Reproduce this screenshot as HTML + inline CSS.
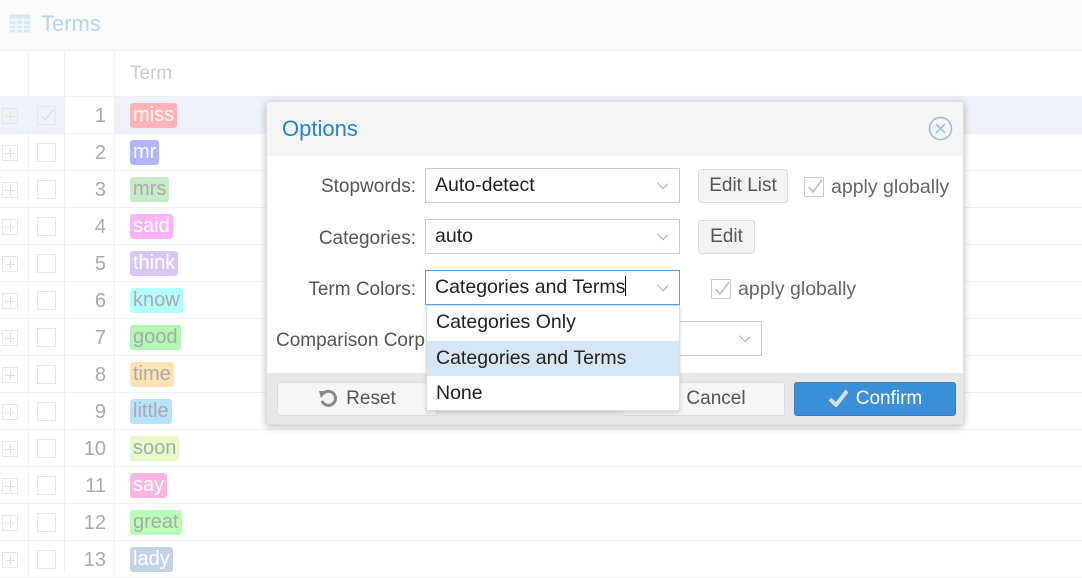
<!DOCTYPE html>
<html><head><style>
*{box-sizing:border-box;margin:0;padding:0}
body{width:1082px;height:574px;overflow:hidden;background:#fff;font-family:"Liberation Sans",sans-serif;position:relative}
.a{position:absolute}
.row{position:absolute;left:0;width:1082px;height:37px;border-bottom:1px solid #f0f0f0}
.vl{position:absolute;top:52px;bottom:0;width:1px;background:#f0f0f0}
.pl{position:absolute;left:2px;width:16px;height:16px;border:1px solid #e6e6e6}
.pl:before{content:"";position:absolute;left:7px;top:2px;width:1px;height:10px;background:#e0e0e0}
.pl:after{content:"";position:absolute;left:2px;top:7px;width:10px;height:1px;background:#e0e0e0}
.cb{position:absolute;left:37px;width:19px;height:19px;border:1px solid #e6e6e6}
.num{position:absolute;left:64px;width:42px;text-align:right;font-size:20px;color:#aaa}
.tag{position:absolute;left:130px;height:25px;line-height:25px;padding:0 3px;border-radius:3px;font-size:20px;color:#bbb}
.lab{position:absolute;right:666px;font-size:19px;color:#555;width:200px;text-align:right}
.sel{position:absolute;left:425px;width:255px;height:35px;border:1px solid #ccc;background:#fff;font-size:19.5px;color:#222;padding-left:9px;line-height:33px}
.chev{position:absolute;right:12px;top:10px;width:9px;height:9px;border-right:1.3px solid #aaa;border-bottom:1.3px solid #aaa;transform:rotate(45deg) scale(1,0.8)}
.btn{position:absolute;height:34px;border:1px solid #ddd;border-radius:3px;background:#f3f3f3;font-size:19px;color:#555;text-align:center;line-height:32px}
.ck{position:absolute;width:20px;height:20px;border:1px solid #ccc}
.ck svg{position:absolute;left:1px;top:0}
.glob{position:absolute;font-size:19.5px;color:#666}
</style></head><body>
<div class="a" style="left:0;top:0;width:1082px;height:51px;background:#fbfbfb;border-bottom:1px solid #f0f0f0"></div>
<svg class="a" style="left:9px;top:14px" width="22" height="19"><rect x="0.5" y="0.5" width="21" height="18" rx="2" fill="#d8e8f5"/><g stroke="#f4f8fc" stroke-width="1.5"><line x1="0" y1="6" x2="22" y2="6"/><line x1="0" y1="11" x2="22" y2="11"/><line x1="0" y1="15" x2="22" y2="15"/><line x1="7" y1="3" x2="7" y2="19"/><line x1="14" y1="3" x2="14" y2="19"/></g></svg>
<div class="a" style="left:41px;top:11px;font-size:22px;color:#b6d6ef">Terms</div>
<div class="a" style="left:130px;top:63px;font-size:19px;color:#ccc">Term</div>
<div class="a" style="left:0;top:97px;width:1082px;height:37px;background:#edf3f9"></div>
<div class="a" style="left:64px;top:97px;width:50px;height:37px;background:#fff"></div>
<div class="vl" style="left:28px"></div><div class="vl" style="left:64px"></div><div class="vl" style="left:114px"></div>
<div class="a" style="left:0;top:96px;width:1082px;height:1px;background:#f0f0f0"></div>

<div id="rows"></div>
<script>
var d=[["miss","#ffb3b3","#fff"],["mr","#b3b3ff","#fff"],["mrs","#c6ecc6","#aaa"],["said","#ffb3ff","#fff"],["think","#d9c6f9","#fff"],["know","#b3ffff","#aaa"],["good","#b3f5b3","#aaa"],["time","#ffe3b3","#aaa"],["little","#b8e3ff","#aaa"],["soon","#e6f9c6","#aaa"],["say","#ffb3e3","#fff"],["great","#b8ffb8","#aaa"],["lady","#c3d2e6","#fff"]];
var h="";
for(var i=0;i<13;i++){var t=97+37*i;
h+='<div class="row" style="top:'+t+'px"></div>';
h+='<div class="pl" style="top:'+(t+11)+'px"></div>';
h+='<div class="cb" style="top:'+(t+9)+'px">'+(i==0?'<svg width="17" height="17" style="position:absolute;left:0;top:0"><path d="M3 9 L7 13 L16 2" stroke="#e2e2e2" stroke-width="1.5" fill="none"/></svg>':'')+'</div>';
h+='<div class="num" style="top:'+(t+8)+'px">'+(i+1)+'</div>';
h+='<div class="tag" style="top:'+(t+6)+'px;background:'+d[i][1]+';color:'+d[i][2]+'">'+d[i][0]+'</div>';}
document.getElementById("rows").innerHTML=h;
</script>

<div class="a" style="left:266px;top:101px;width:698px;height:324px;background:#fff;border:1px solid #ddd;border-radius:3px;box-shadow:0 2px 8px rgba(0,0,0,0.25);overflow:hidden">
 <div class="a" style="left:0;top:0;width:698px;height:54px;background:#f5f5f5"></div>
 <div class="a" style="left:15px;top:14px;font-size:22px;color:#1f86d0">Options</div>
 <svg class="a" style="left:661px;top:14px" width="25" height="25"><circle cx="12.5" cy="12.5" r="11" fill="none" stroke="#8fbde5" stroke-width="1.5"/><path d="M8 8 L17 17 M17 8 L8 17" stroke="#8fbde5" stroke-width="1.5"/></svg>
 <div class="a" style="left:0;top:271px;width:698px;height:53px;background:#e8e8e8"></div>
</div>
<div class="lab" style="top:176px">Stopwords:</div>
<div class="sel" style="top:168px">Auto-detect<div class="chev"></div></div>
<div class="btn" style="left:698px;top:169px;width:90px">Edit List</div>
<div class="ck" style="left:804px;top:177px"><svg width="18" height="18"><path d="M3 9 L7 14 L16 2" stroke="#bbb" stroke-width="1.5" fill="none"/></svg></div>
<div class="glob" style="left:831px;top:176px">apply globally</div>

<div class="lab" style="top:228px">Categories:</div>
<div class="sel" style="top:219px">auto<div class="chev"></div></div>
<div class="btn" style="left:698px;top:220px;width:57px">Edit</div>

<div class="lab" style="top:279px">Term Colors:</div>
<div class="sel" style="top:270px;border-color:#5aa3e0">Categories and Terms<span style="display:inline-block;width:1px;height:20px;background:#000;vertical-align:-3px"></span><div class="chev"></div></div>
<div class="ck" style="left:711px;top:279px"><svg width="18" height="18"><path d="M3 9 L7 14 L16 2" stroke="#bbb" stroke-width="1.5" fill="none"/></svg></div>
<div class="glob" style="left:738px;top:278px">apply globally</div>

<div class="a" style="left:276px;top:330px;font-size:19px;color:#555">Comparison Corpus:</div>
<div class="sel" style="left:520px;top:321px;width:242px"><div class="chev"></div></div>

<div class="btn" style="left:277px;top:382px;width:160px;background:#f5f5f5"><svg style="vertical-align:-4px;margin-right:8px" width="20" height="20"><path d="M5 6 A7 7 0 1 1 4 13" stroke="#888" stroke-width="3" fill="none"/><path d="M1 3 L9 3 L3 10Z" fill="#888"/></svg>Reset</div>
<div class="btn" style="left:622px;top:382px;width:163px;background:#f5f5f5;padding-left:25px">Cancel</div>
<div class="btn" style="left:794px;top:382px;width:162px;background:#3a8fd6;border-color:#2f7fc4;color:#fff"><svg style="vertical-align:-3px;margin-right:8px" width="20" height="18"><path d="M2 10 L8 16 L19 2" stroke="#cfe3f5" stroke-width="4" fill="none"/></svg>Confirm</div>

<div class="a" style="left:426px;top:305px;width:254px;height:106px;background:#fff;border:1px solid #ddd;box-shadow:0 2px 4px rgba(0,0,0,0.15);font-size:19.5px;color:#222">
 <div style="height:35px;line-height:33px;padding-left:9px">Categories Only</div>
 <div style="height:35px;line-height:35px;padding-left:9px;background:#d5e7f5">Categories and Terms</div>
 <div style="height:35px;line-height:35px;padding-left:9px">None</div>
</div>
</body></html>
